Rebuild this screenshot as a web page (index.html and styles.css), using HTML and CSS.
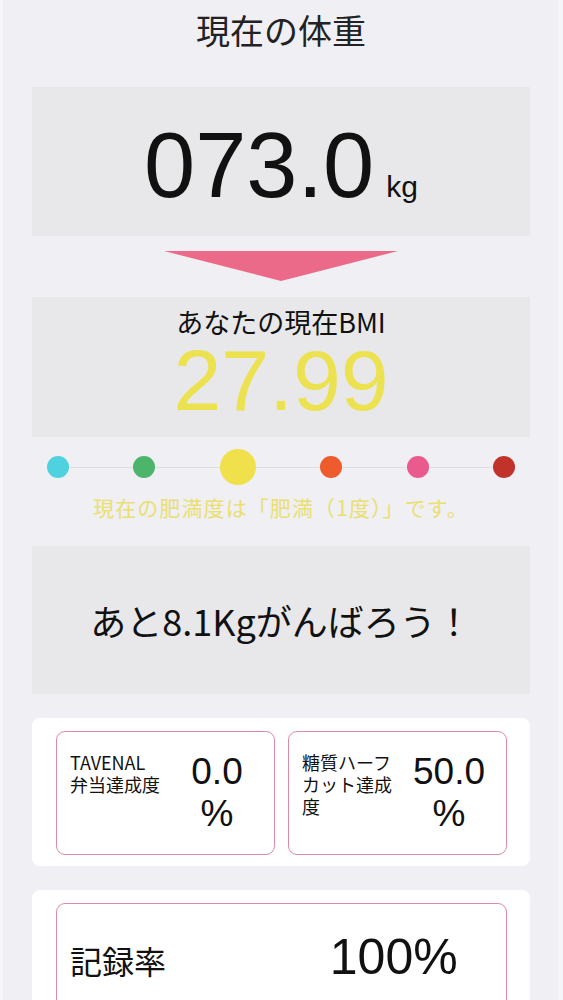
FILE: index.html
```html
<!DOCTYPE html>
<html lang="ja">
<head>
<meta charset="utf-8">
<title>現在の体重</title>
<link rel="stylesheet" href="styles.css">
</head>
<body>
<div class="screen">
  <h1 class="title">現在の体重</h1>

  <div class="panel weight">
    <span class="weight-value">073.0</span><span class="weight-unit">kg</span>
  </div>

  <div class="arrow"></div>

  <div class="panel bmi">
    <div class="bmi-label">あなたの現在BMI</div>
    <div class="bmi-value">27.99</div>
  </div>

  <div class="scale">
    <span class="dot cyan"></span>
    <span class="dot green"></span>
    <span class="dot yellow big"></span>
    <span class="dot orange"></span>
    <span class="dot pink"></span>
    <span class="dot red"></span>
  </div>

  <p class="status">現在の肥満度は「肥満（1度）」です。</p>

  <div class="panel goal">あと8.1Kgがんばろう！</div>

  <div class="card">
    <div class="stat">
      <div class="stat-label">TAVENAL<br>弁当達成度</div>
      <div class="stat-value">0.0<br>%</div>
    </div>
    <div class="stat">
      <div class="stat-label">糖質ハーフ<br>カット達成<br>度</div>
      <div class="stat-value">50.0<br>%</div>
    </div>
  </div>

  <div class="card card-last">
    <div class="record">
      <div class="record-label">記録率</div>
      <div class="record-value">100%</div>
    </div>
  </div>
</div>
</body>
</html>
```

FILE: styles.css
```css
body {
  margin: 0;
  background: #f6f6f8;
  font-family: "Noto Sans CJK JP", sans-serif;
  color: #111;
}

.screen {
  margin: 0 5px 0 3px;
  padding: 0 28px 0 29px;
  min-height: 1000px;
  background: #efeff4;
  overflow: hidden;
}

.title {
  margin: 0 0 37px;
  padding-top: 10px;
  height: 40px;
  line-height: 40px;
  font-size: 34px;
  font-weight: normal;
  text-align: center;
  color: #222;
}

.panel {
  background: #e8e8ea;
}

.weight {
  height: 149px;
  box-sizing: border-box;
  padding-top: 32px;
  display: flex;
  justify-content: center;
  align-items: baseline;
  gap: 12px;
}

.weight-value {
  font: 92px/92px "Liberation Sans", sans-serif;
  color: #111;
}

.weight-unit {
  font: 30px/30px "Liberation Sans", sans-serif;
  color: #111;
}

.arrow {
  width: 0;
  height: 0;
  margin: 15px auto 16px;
  border-left: 117.5px solid transparent;
  border-right: 117.5px solid transparent;
  border-top: 30px solid #ec6a89;
}

.bmi {
  height: 140px;
  box-sizing: border-box;
  padding-top: 10px;
  text-align: center;
}

.bmi-label {
  font-size: 27px;
  line-height: 30px;
  color: #111;
}

.bmi-value {
  font: 86px/86px "Liberation Sans", sans-serif;
  color: #ece14e;
}

.scale {
  position: relative;
  margin-top: 12px;
  padding: 0 15px;
  height: 36px;
  display: flex;
  justify-content: space-between;
  align-items: center;
}

.scale::before {
  content: "";
  position: absolute;
  left: 26px;
  right: 26px;
  top: 50%;
  height: 1px;
  background: #dfdfe3;
}

.dot {
  position: relative;
  width: 22px;
  height: 22px;
  border-radius: 50%;
}

.dot.big {
  width: 36px;
  height: 36px;
}

.cyan { background: #4fd2e0; }
.green { background: #4db46c; }
.yellow { background: #efe04c; }
.orange { background: #ee5b2c; }
.pink { background: #ea5a8d; }
.red { background: #c1322b; }

.status {
  margin: 10px 0 0;
  text-align: center;
  font-size: 21px;
  line-height: 24px;
  letter-spacing: 1.1px;
  color: #eadf72;
}

.goal {
  margin-top: 27px;
  height: 148px;
  display: flex;
  align-items: center;
  justify-content: center;
  font-size: 36px;
  color: #111;
}

.card {
  margin-top: 24px;
  padding: 13px 23px 11px 24px;
  background: #fff;
  border-radius: 8px;
  display: flex;
  gap: 13px;
}

.card-last {
  padding-bottom: 20px;
}

.stat {
  flex: 1;
  height: 124px;
  box-sizing: border-box;
  padding: 19px 0 0 13px;
  border: 1.5px solid #dc8ca0;
  border-radius: 9px;
  display: flex;
}

.stat-label {
  flex: 1;
  font-size: 18px;
  line-height: 22px;
  color: #111;
}

.stat-value {
  width: 80px;
  margin-right: 17px;
  text-align: center;
  font: 37px/42px "Liberation Sans", sans-serif;
  color: #111;
}

.record {
  flex: 1;
  height: 124px;
  box-sizing: border-box;
  padding-top: 24px;
  border: 1.5px solid #dc8ca0;
  border-radius: 9px;
  display: grid;
  grid-template-columns: 1fr 1fr;
  align-items: baseline;
}

.record-label {
  padding-left: 13px;
  font-size: 32px;
  color: #111;
}

.record-value {
  text-align: center;
  font: 50px "Liberation Sans", sans-serif;
  color: #111;
}
```
